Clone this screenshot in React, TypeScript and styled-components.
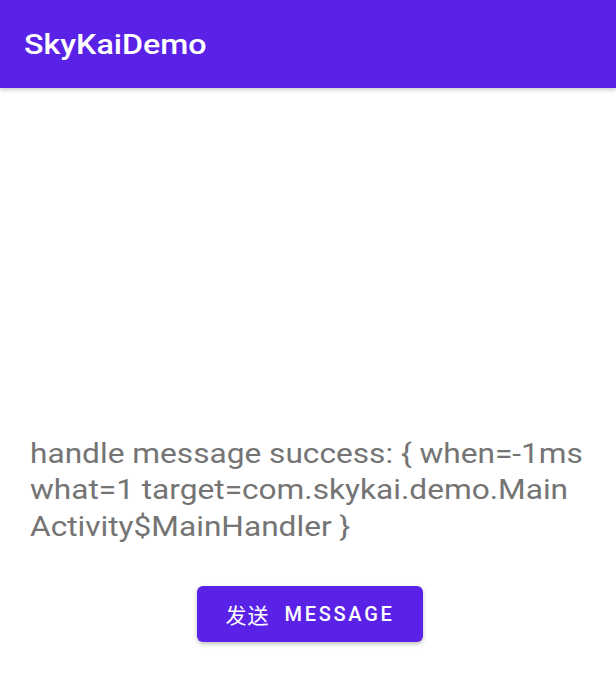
import React from "react";
import styled, { createGlobalStyle } from "styled-components";

const Global = createGlobalStyle`
  html, body { margin: 0; padding: 0; background: #ffffff; }
  body { font-family: Roboto, "Noto Sans CJK SC", sans-serif; }
  #root { height: 676px; }
`;

const Screen = styled.div`
  width: 616px;
  height: 676px;
  display: flex;
  flex-direction: column;
  background: #ffffff;
  overflow: hidden;
`;

const AppBar = styled.header`
  height: 88px;
  flex: none;
  display: flex;
  align-items: center;
  padding: 0 24px;
  background: #5a22e6;
  box-shadow: 0 2px 4px rgba(0, 0, 0, 0.2);
  position: relative;
  z-index: 1;
`;

const Title = styled.h1`
  margin: 0;
  margin-top: 1px;
  font-family: Roboto, sans-serif;
  font-weight: 500;
  font-size: 28px;
  line-height: 32px;
  color: #ffffff;
  transform: scaleX(1.15);
  transform-origin: left center;
`;

const Content = styled.main`
  flex: 1;
  display: flex;
  flex-direction: column;
  justify-content: flex-end;
  align-items: center;
  padding: 0 30px 34px;
`;

const Message = styled.p`
  align-self: stretch;
  margin: 0 0 41px;
  font-family: Roboto, sans-serif;
  font-size: 28px;
  line-height: 36.5px;
  color: #747474;
  white-space: nowrap;
  transform: scaleX(1.13);
  transform-origin: left center;
`;

const SendButton = styled.button`
  width: 226px;
  height: 56px;
  margin-left: 4px;
  padding: 0;
  border: none;
  border-radius: 6px;
  background: #5a22e6;
  color: #ffffff;
  font-family: Roboto, "Noto Sans CJK SC", sans-serif;
  font-weight: 500;
  font-size: 20px;
  letter-spacing: 2.7px;
  box-shadow: 0 2px 4px rgba(0, 0, 0, 0.25);
  display: flex;
  align-items: center;
  justify-content: center;
  gap: 15px;
`;

const Cjk = styled.span`
  font-weight: 400;
  font-size: 21px;
  letter-spacing: 1px;
`;

export default function App() {
  return (
    <>
      <Global />
      <Screen>
        <AppBar>
          <Title>SkyKaiDemo</Title>
        </AppBar>
        <Content>
          <Message>
            handle message success: {"{"} when=-1ms
            <br />
            what=1 target=com.skykai.demo.Main
            <br />
            Activity$MainHandler {"}"}
          </Message>
          <SendButton>
            <Cjk>发送</Cjk>
            <span>MESSAGE</span>
          </SendButton>
        </Content>
      </Screen>
    </>
  );
}
